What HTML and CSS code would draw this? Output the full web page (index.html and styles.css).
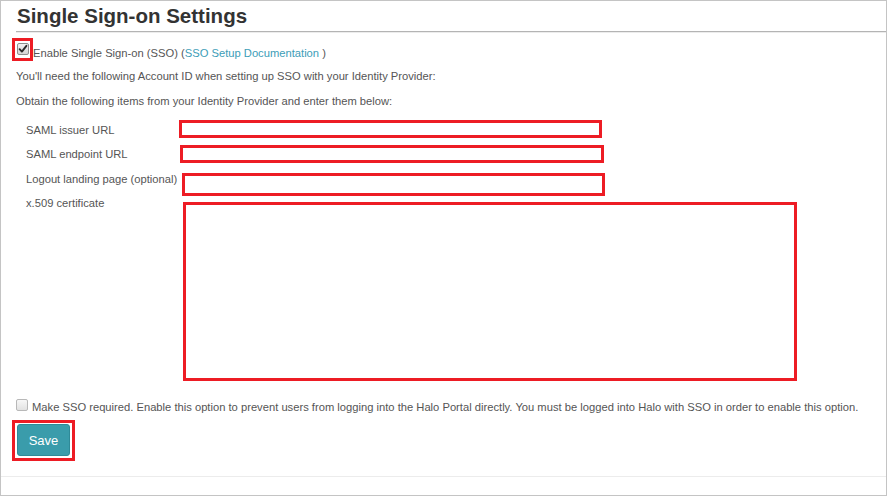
FILE: index.html
```html
<!DOCTYPE html>
<html lang="en">
<head>
<meta charset="utf-8">
<title>Single Sign-on Settings</title>
<link rel="stylesheet" href="styles.css">
</head>
<body>
<div class="frame">
  <div class="content">
    <h1 class="title">Single Sign-on Settings</h1>

    <div class="enable-row">
      <span class="mark-box">
        <span class="cb cb-checked">
          <svg viewBox="0 0 10 10" width="10" height="10"><path d="M1.6 5.2 L3.9 7.6 L8.4 1.8" fill="none" stroke="#2b2b2b" stroke-width="1.9" stroke-linecap="round" stroke-linejoin="round"/></svg>
        </span>
      </span>
      <span class="enable-text">Enable Single Sign-on (SSO) (<a class="doc-link" href="#">SSO Setup Documentation</a> )</span>
    </div>

    <p class="note note-first">You'll need the following Account ID when setting up SSO with your Identity Provider:</p>
    <p class="note note-second">Obtain the following items from your Identity Provider and enter them below:</p>

    <div class="fields">
      <div class="row row-issuer">
        <span class="label">SAML issuer URL</span>
        <span class="field field-issuer"></span>
      </div>
      <div class="row row-endpoint">
        <span class="label">SAML endpoint URL</span>
        <span class="field field-endpoint"></span>
      </div>
      <div class="row row-logout">
        <span class="label">Logout landing page (optional)</span>
        <span class="field field-logout"></span>
      </div>
      <div class="row row-cert">
        <span class="label">x.509 certificate</span>
        <span class="field field-cert"></span>
      </div>
    </div>

    <div class="required-row">
      <span class="cb cb-empty"></span>
      <span class="required-text">Make SSO required. Enable this option to prevent users from logging into the Halo Portal directly. You must be logged into Halo with SSO in order to enable this option.</span>
    </div>

    <div class="save-box">
      <button class="save-btn" type="button">Save</button>
    </div>
  </div>
  <div class="footer-rule"></div>
</div>
</body>
</html>
```

FILE: styles.css
```css
html, body {
  margin: 0;
  padding: 0;
  background: #ffffff;
}

.frame {
  box-sizing: border-box;
  width: 887px;
  height: 496px;
  border: 1px solid #c4c4c4;
  font-family: "Liberation Sans", Arial, sans-serif;
  font-size: 11.2px;
  color: #555555;
  display: flex;
  flex-direction: column;
}

.content {
  padding-left: 15px;
}

.title {
  margin: 0;
  height: 30px;
  line-height: 29px;
  font-size: 20.5px;
  font-weight: bold;
  color: #333333;
  border-bottom: 1px solid #b4b4b4;
  box-shadow: 0 1px 0 #ececec;
  padding-left: 1px;
}

.enable-row {
  display: flex;
  align-items: flex-start;
  margin-top: 6px;
  margin-left: -4px;
}

.mark-box {
  box-sizing: border-box;
  width: 21px;
  height: 23px;
  border: 3px solid #ed1c24;
  display: flex;
  align-items: flex-start;
  padding-top: 2px;
  padding-left: 2px;
}

.cb {
  box-sizing: border-box;
  width: 12px;
  height: 12px;
  border-radius: 2px;
  display: inline-flex;
  align-items: center;
  justify-content: center;
  flex: none;
}

.cb-checked {
  border: 1px solid #8e8e8e;
  background: linear-gradient(#f2f2f2, #d4d4d4);
}

.cb-empty {
  border: 1px solid #b8b8b8;
  background: linear-gradient(#f7f7f7, #e2e2e2);
}

.enable-text {
  line-height: 14px;
  padding-top: 8px;
}

.doc-link {
  color: #3c9db7;
  text-decoration: none;
}

.note {
  margin: 0;
  line-height: 14px;
}

.note-first {
  margin-top: 8px;
}

.note-second {
  margin-top: 11px;
}

.fields {
  margin-top: 12px;
  padding-left: 10px;
  display: flex;
  flex-direction: column;
}

.row {
  display: flex;
  align-items: flex-start;
}

.label {
  width: 153px;
  flex: none;
  line-height: 14px;
  white-space: nowrap;
}

.field {
  box-sizing: border-box;
  border: 3px solid #ed1c24;
  display: block;
}

.row-issuer .label { padding-top: 3px; }
.field-issuer { width: 423px; height: 18px; }

.row-endpoint { margin-top: 7px; }
.row-endpoint .label { padding-top: 2px; }
.field-endpoint { width: 424px; height: 18px; margin-left: 1px; }

.row-logout { margin-top: 10px; }
.row-logout .label { margin-top: -1px; }
.field-logout { width: 423px; height: 23px; margin-left: 3px; }

.row-cert { margin-top: 6px; }
.row-cert .label { margin-top: -6px; }
.field-cert { width: 614px; height: 179px; margin-left: 4px; }

.required-row {
  display: flex;
  align-items: flex-start;
  margin-top: 18px;
}

.required-row .cb {
  margin-top: 0;
  margin-right: 4px;
}

.required-text {
  line-height: 14px;
  padding-top: 1px;
  white-space: nowrap;
}

.save-box {
  box-sizing: border-box;
  width: 63px;
  height: 41px;
  border: 3px solid #ed1c24;
  padding: 1px 2px;
  margin-top: 6px;
  margin-left: -4px;
}

.save-btn {
  box-sizing: border-box;
  width: 53px;
  height: 32px;
  border: 1px solid #2f8a98;
  border-radius: 3px;
  background: #3a9cab;
  color: #ffffff;
  font-family: "Liberation Sans", Arial, sans-serif;
  font-size: 13px;
  padding: 0;
  display: block;
}

.footer-rule {
  margin-top: 15px;
  border-top: 1px solid #ececec;
}
```
